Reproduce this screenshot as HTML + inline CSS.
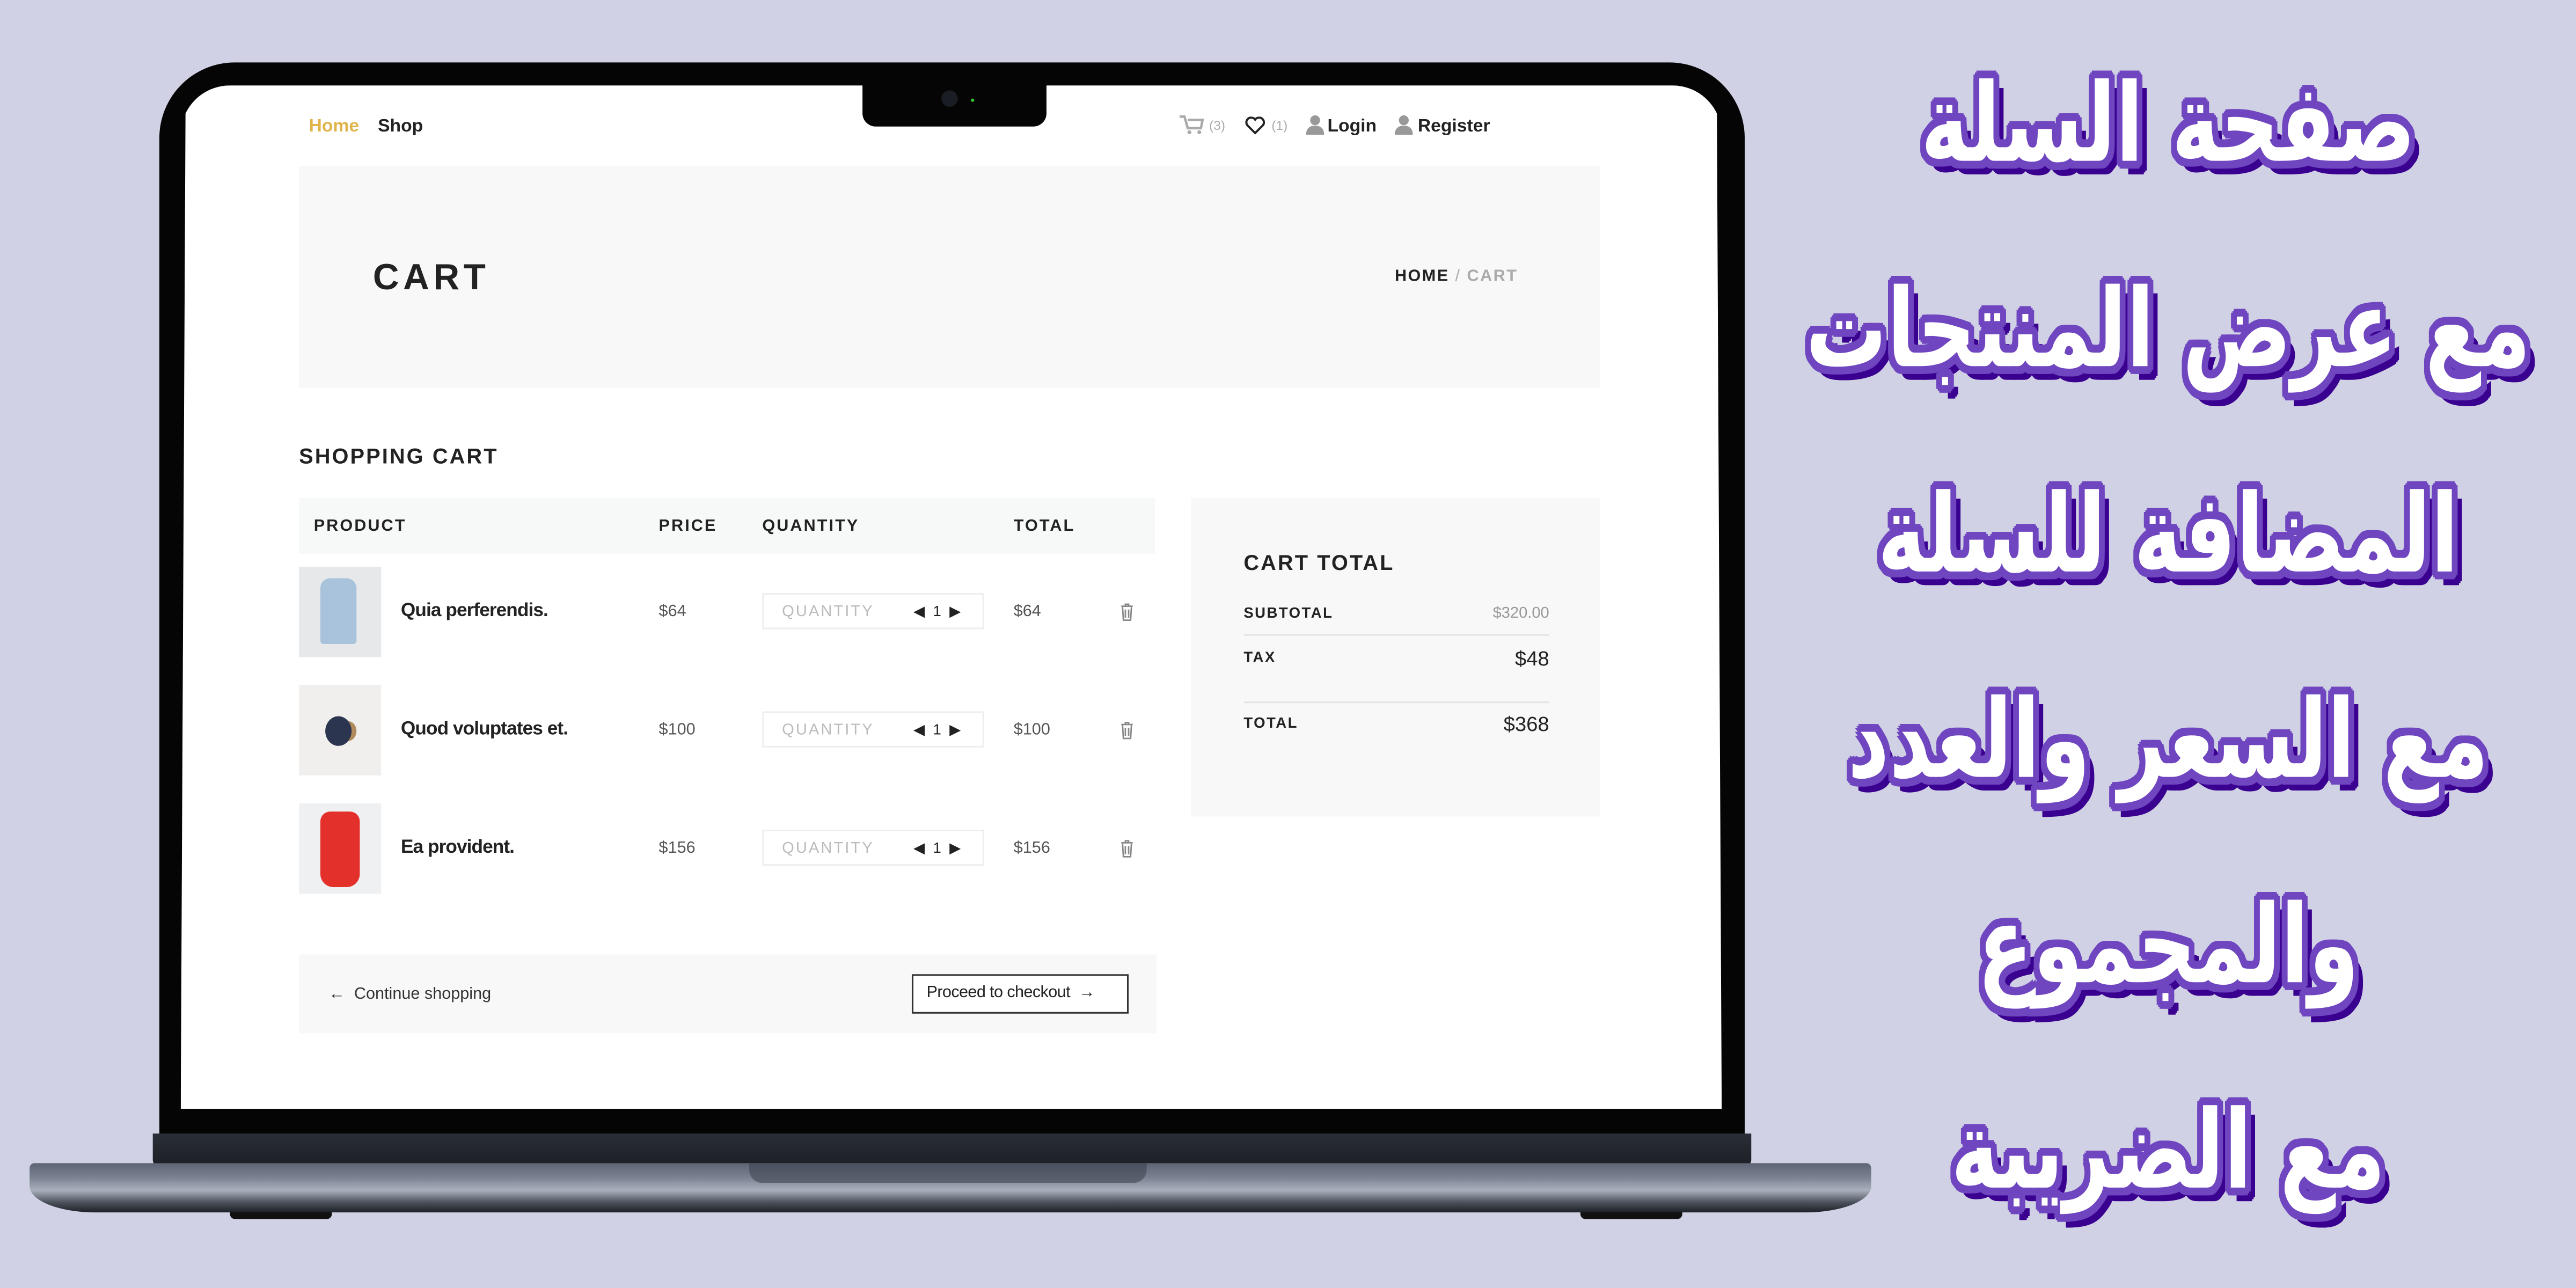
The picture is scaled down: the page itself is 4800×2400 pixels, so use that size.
<!DOCTYPE html>
<html><head><meta charset="utf-8"><style>
html,body{margin:0;padding:0;}
body{width:4800px;height:2400px;overflow:hidden;background:#d0d1e4;}
#w{position:absolute;left:0;top:0;width:1568px;height:784px;transform:scale(3.0612);transform-origin:0 0;font-family:"Liberation Sans",sans-serif;}
.a{position:absolute;}
.t{position:absolute;white-space:nowrap;line-height:1;}
.ar{position:absolute;left:1060px;width:520px;text-align:center;font-family:"DejaVu Sans",sans-serif;font-weight:bold;font-size:56px;color:#fff;line-height:1;white-space:nowrap;direction:rtl;transform:scale(0.88,1.18);transform-origin:258px 30px;
text-shadow:4px 0 #6f45c0,-4px 0 #6f45c0,0 4px #6f45c0,0 -4px #6f45c0,3px 3px #6f45c0,-3px 3px #6f45c0,3px -3px #6f45c0,-3px -3px #6f45c0,2px 4px #6f45c0,-2px 4px #6f45c0,4px 2px #6f45c0,-4px 2px #6f45c0,2px -4px #6f45c0,-2px -4px #6f45c0,4px -2px #6f45c0,-4px -2px #6f45c0,6px 6px #3a0090,5px 7px #3a0090,7px 5px #3a0090,4px 7px #3a0090;}
.h{font-size:10px;font-weight:bold;letter-spacing:1px;color:#222;}
.nm{font-size:11.5px;font-weight:bold;color:#222;letter-spacing:-0.3px;}
.pr{font-size:10px;color:#555;}
.q{position:absolute;left:464px;width:135px;height:22px;border:1px solid #eee;box-sizing:border-box;}
.q span{position:absolute;top:6px;line-height:1;font-size:9.5px;}
</style></head><body><div id="w">
<!-- laptop -->
<div class="a" style="left:97px;top:38px;width:965px;height:660px;background:#050505;border-radius:46px 46px 0 0;"></div>
<div class="a" style="left:110px;top:52px;width:938px;height:623px;background:#fff;border-radius:30px 30px 0 0;clip-path:polygon(3px 0,935px 0,938px 100%,0 100%);"></div>
<div class="a" style="left:525px;top:50px;width:112px;height:27px;background:#050505;border-radius:0 0 8px 8px;"></div>
<div class="a" style="left:573px;top:55px;width:10px;height:10px;background:#1a1d24;border-radius:50%;"></div>
<div class="a" style="left:591px;top:60px;width:2px;height:2px;background:#3c3;border-radius:50%;"></div>
<div class="a" style="left:93px;top:690px;width:973px;height:20px;background:linear-gradient(#2a2e36,#1c1f25);border-radius:0 0 4px 4px;"></div>
<div class="a" style="left:140px;top:730px;width:62px;height:12px;background:#111;border-radius:0 0 3px 3px;"></div>
<div class="a" style="left:962px;top:730px;width:62px;height:12px;background:#111;border-radius:0 0 3px 3px;"></div>
<div class="a" style="left:18px;top:708px;width:1121px;height:30px;background:linear-gradient(#5d6574 0%,#7b8392 30%,#aab1bd 55%,#4a505b 80%,#1d2026 100%);border-radius:3px 3px 40px 40px/3px 3px 16px 16px;"></div>
<div class="a" style="left:456px;top:708px;width:242px;height:12px;background:linear-gradient(#4a515e,#5b6270);border-radius:0 0 8px 8px;"></div>
<!-- nav -->
<div class="t" style="left:188px;top:72px;font-size:11px;font-weight:bold;color:#e0b44a;">Home</div>
<div class="t" style="left:230px;top:72px;font-size:11px;font-weight:bold;color:#222;">Shop</div>
<svg class="a" style="left:718px;top:70px" width="15" height="12" viewBox="0 0 15 12"><path d="M0 1h3l2 7h8l1-5H5" fill="none" stroke="#aaa" stroke-width="1.5"/><circle cx="6" cy="10.5" r="1.2" fill="#aaa"/><circle cx="12" cy="10.5" r="1.2" fill="#aaa"/></svg>
<div class="t" style="left:736px;top:73px;font-size:8px;color:#aaa;">(3)</div>
<svg class="a" style="left:758px;top:71px" width="12" height="11" viewBox="0 0 12 11"><path d="M6 10L1.2 5.2A2.8 2.8 0 0 1 6 1.8a2.8 2.8 0 0 1 4.8 3.4z" fill="none" stroke="#222" stroke-width="1.3"/></svg>
<div class="t" style="left:774px;top:73px;font-size:8px;color:#aaa;">(1)</div>
<svg class="a" style="left:795px;top:70px" width="11" height="12" viewBox="0 0 11 12"><circle cx="5.5" cy="3.2" r="3" fill="#999"/><path d="M0 12c0-4 2.5-5.5 5.5-5.5S11 8 11 12z" fill="#999"/></svg>
<div class="t" style="left:808px;top:72px;font-size:11px;font-weight:bold;color:#222;">Login</div>
<svg class="a" style="left:849px;top:70px" width="11" height="12" viewBox="0 0 11 12"><circle cx="5.5" cy="3.2" r="3" fill="#999"/><path d="M0 12c0-4 2.5-5.5 5.5-5.5S11 8 11 12z" fill="#999"/></svg>
<div class="t" style="left:863px;top:72px;font-size:11px;font-weight:bold;color:#222;">Register</div>
<!-- hero -->
<div class="a" style="left:182px;top:101px;width:792px;height:135px;background:#f8f8f8;"></div>
<div class="t" style="left:227px;top:158px;font-size:22px;font-weight:bold;letter-spacing:2.5px;color:#222;">CART</div>
<div class="t" style="left:849px;top:164px;font-size:10px;font-weight:bold;letter-spacing:0.8px;color:#222;">HOME <span style="color:#aaa;font-weight:normal">/</span> <span style="color:#aaa">CART</span></div>
<div class="t" style="left:182px;top:271px;font-size:13px;font-weight:bold;letter-spacing:1px;color:#222;">SHOPPING CART</div>
<!-- table -->
<div class="a" style="left:182px;top:303px;width:521px;height:34px;background:#f7f8f8;"></div>
<div class="t h" style="left:191px;top:316px;">PRODUCT</div>
<div class="t h" style="left:401px;top:316px;">PRICE</div>
<div class="t h" style="left:464px;top:316px;">QUANTITY</div>
<div class="t h" style="left:617px;top:316px;">TOTAL</div>

<div class="a" style="left:182px;top:345px;width:50px;height:55px;background:#e6e8ea;"></div>
<div class="a" style="left:195px;top:352px;width:22px;height:40px;background:#a9c3dc;border-radius:6px 6px 2px 2px;"></div>
<div class="a" style="left:182px;top:417px;width:50px;height:55px;background:#f1eeee;"></div>
<div class="a" style="left:198px;top:436px;width:16px;height:18px;background:#2c3550;border-radius:50%;box-shadow:6px 0 0 -3px #b08a5a;"></div>
<div class="a" style="left:182px;top:489px;width:50px;height:55px;background:#eef0f2;"></div>
<div class="a" style="left:195px;top:494px;width:24px;height:46px;background:#e3302a;border-radius:6px 6px 8px 8px;"></div>

<div class="t nm" style="left:244px;top:367px;">Quia perferendis.</div>
<div class="t nm" style="left:244px;top:439px;">Quod voluptates et.</div>
<div class="t nm" style="left:244px;top:511px;">Ea provident.</div>
<div class="t pr" style="left:401px;top:368px;">$64</div>
<div class="t pr" style="left:401px;top:440px;">$100</div>
<div class="t pr" style="left:401px;top:512px;">$156</div>
<div class="t pr" style="left:617px;top:368px;">$64</div>
<div class="t pr" style="left:617px;top:440px;">$100</div>
<div class="t pr" style="left:617px;top:512px;">$156</div>
<div class="q" style="top:361px;"><span style="left:11px;color:#bbb;letter-spacing:1px;">QUANTITY</span><span style="left:91px;color:#222;font-size:9px;">◀&nbsp; 1 &nbsp;▶</span></div>
<div class="q" style="top:433px;"><span style="left:11px;color:#bbb;letter-spacing:1px;">QUANTITY</span><span style="left:91px;color:#222;font-size:9px;">◀&nbsp; 1 &nbsp;▶</span></div>
<div class="q" style="top:505px;"><span style="left:11px;color:#bbb;letter-spacing:1px;">QUANTITY</span><span style="left:91px;color:#222;font-size:9px;">◀&nbsp; 1 &nbsp;▶</span></div>
<svg class="a" style="left:682px;top:367px" width="8" height="11" viewBox="0 0 8 11"><path d="M0.5 2h7M3 2V0.8h2V2M1.3 2.5l0.5 8h4.4l0.5-8M3 4v5M5 4v5" fill="none" stroke="#888" stroke-width="0.9"/></svg>
<svg class="a" style="left:682px;top:439px" width="8" height="11" viewBox="0 0 8 11"><path d="M0.5 2h7M3 2V0.8h2V2M1.3 2.5l0.5 8h4.4l0.5-8M3 4v5M5 4v5" fill="none" stroke="#888" stroke-width="0.9"/></svg>
<svg class="a" style="left:682px;top:511px" width="8" height="11" viewBox="0 0 8 11"><path d="M0.5 2h7M3 2V0.8h2V2M1.3 2.5l0.5 8h4.4l0.5-8M3 4v5M5 4v5" fill="none" stroke="#888" stroke-width="0.9"/></svg>
<!-- footer bar -->
<div class="a" style="left:182px;top:581px;width:522px;height:48px;background:#f8f8f8;"></div>
<div class="t" style="left:200px;top:601px;font-size:10px;color:#333;">&#x2190;&nbsp; Continue shopping</div>
<div class="a" style="left:555px;top:593px;width:132px;height:24px;border:1px solid #333;box-sizing:border-box;background:#fff;"></div>
<div class="t" style="left:564px;top:600px;font-size:10px;color:#222;letter-spacing:-0.2px;">Proceed to checkout &nbsp;&#x2192;</div>
<!-- cart total -->
<div class="a" style="left:725px;top:303px;width:249px;height:194px;background:#f8f8f8;"></div>
<div class="t" style="left:757px;top:336px;font-size:13px;font-weight:bold;letter-spacing:1px;color:#222;">CART TOTAL</div>
<div class="t" style="left:757px;top:369px;font-size:9px;font-weight:bold;letter-spacing:.8px;color:#222;">SUBTOTAL</div>
<div class="t" style="left:880px;width:63px;text-align:right;top:369px;font-size:9.5px;color:#999;">$320.00</div>
<div class="a" style="left:757px;top:386px;width:186px;height:1px;background:#e4e4e4;"></div>
<div class="t" style="left:757px;top:396px;font-size:9px;font-weight:bold;letter-spacing:.8px;color:#222;">TAX</div>
<div class="t" style="left:880px;width:63px;text-align:right;top:395px;font-size:12.5px;color:#222;">$48</div>
<div class="a" style="left:757px;top:427px;width:186px;height:1px;background:#e4e4e4;"></div>
<div class="t" style="left:757px;top:436px;font-size:9px;font-weight:bold;letter-spacing:.8px;color:#222;">TOTAL</div>
<div class="t" style="left:880px;width:63px;text-align:right;top:435px;font-size:12.5px;color:#222;">$368</div>
<!-- arabic -->
<div class="ar" style="top:49px;">صفحة السلة</div>
<div class="ar" style="top:174px;">مع عرض المنتجات</div>
<div class="ar" style="top:299px;">المضافة للسلة</div>
<div class="ar" style="top:424px;">مع السعر والعدد</div>
<div class="ar" style="top:549px;">والمجموع</div>
<div class="ar" style="top:674px;">مع الضريبة</div>
</div></body></html>
